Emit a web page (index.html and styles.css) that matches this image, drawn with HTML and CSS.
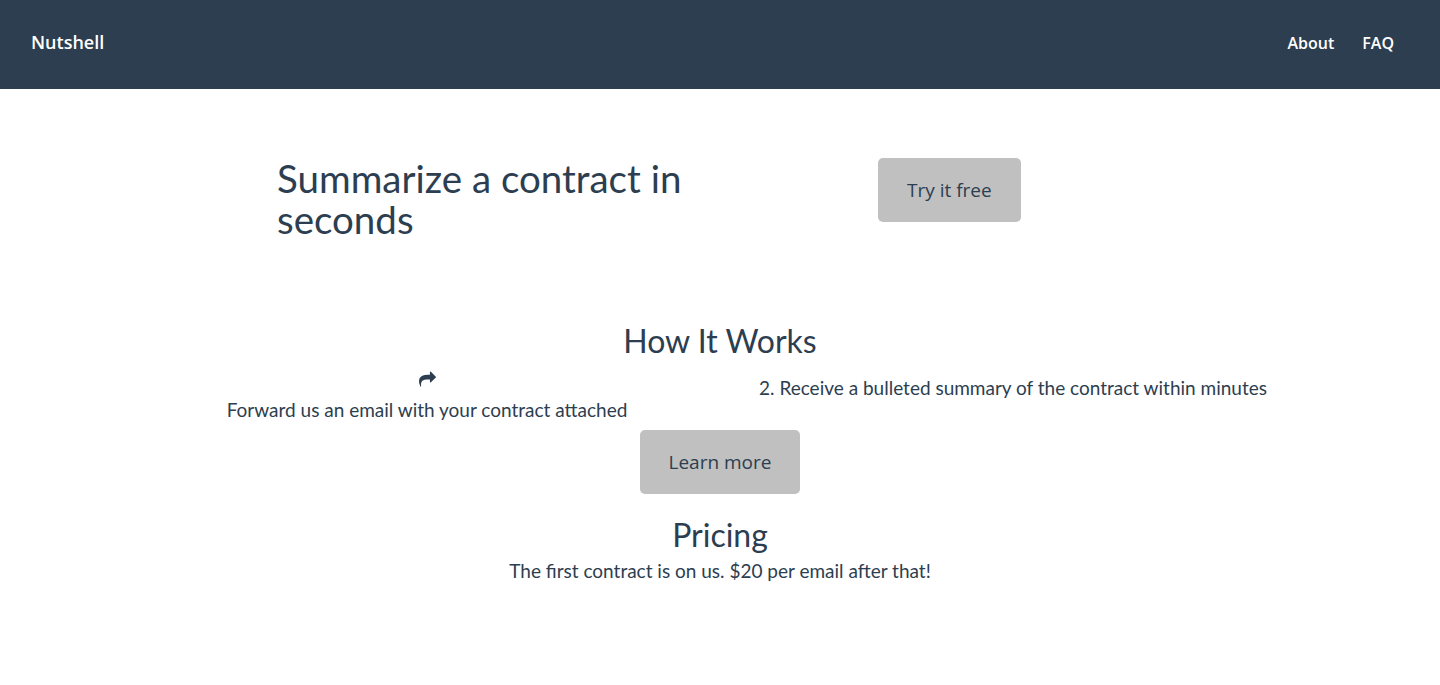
FILE: index.html
```html
<!DOCTYPE html>
<html>
<head>
<meta charset="utf-8">
<link rel="stylesheet" href="styles.css">
</head>
<body>
<header class="topbar">
  <a class="brand">Nutshell</a>
  <nav class="nav">
    <a class="nav-link">About</a>
    <a class="nav-link">FAQ</a>
  </nav>
</header>
<main>
  <section class="hero">
    <h1 class="hero-title">Summarize a contract in seconds</h1>
    <button class="btn btn-try">Try it free</button>
  </section>
  <section class="how">
    <h2 class="section-title">How It Works</h2>
    <div class="steps">
      <div class="step step-one">
        <svg class="share-icon" viewBox="0 0 1792 1792" width="17" height="17"><path fill="#2c3e50" d="M1792 640q0 26-19 45l-512 512q-19 19-45 19t-45-19-19-45v-256h-224q-98 0-175.5 6t-154 21.5-133 42.5-105.5 69.5-80 101-48.5 138.5-17.5 181q0 55 5 123 0 6 2.5 23.5t2.5 26.5q0 15-8.5 25t-23.5 10q-16 0-28-17-7-9-13-22t-13.5-30-10.5-24q-127-285-127-451 0-199 53-333 162-403 875-403h224v-256q0-26 19-45t45-19 45 19l512 512q19 19 19 45z"/></svg>
        <p class="step-text">Forward us an email with your contract attached</p>
      </div>
      <div class="step step-two">
        <p class="step-text">2. Receive a bulleted summary of the contract within minutes</p>
      </div>
    </div>
    <button class="btn btn-learn">Learn more</button>
  </section>
  <section class="pricing">
    <h2 class="section-title">Pricing</h2>
    <p class="pricing-text">The first contract is on us. $20 per email after that!</p>
  </section>
</main>
</body>
</html>
```
FILE: styles.css
```css
* { box-sizing: border-box; }
body {
  margin: 0;
  font-family: Lato, "Open Sans", sans-serif;
  color: #2c3e50;
  background: #fff;
}
.topbar {
  height: 89px;
  background: #2c3e50;
  display: flex;
  align-items: center;
  justify-content: space-between;
  padding: 0 46px 0 31px;
}
.brand {
  font-family: "Open Sans", sans-serif;
  font-weight: 600;
  font-size: 18px;
  color: #fff;
  margin-top: -6px;
}
.nav {
  display: flex;
  gap: 28px;
  margin-top: -4px;
}
.nav-link {
  font-family: "Open Sans", sans-serif;
  font-weight: 600;
  font-size: 16px;
  color: #fff;
}
.hero {
  width: 886px;
  margin: 0 auto;
  display: flex;
  align-items: flex-start;
  padding-top: 69px;
}
.hero-title {
  flex: 0 0 440px;
  margin: 0;
  font-weight: 400;
  font-size: 38.5px;
  line-height: 41px;
}
.btn {
  font-family: "Open Sans", sans-serif;
  font-size: 19px;
  line-height: 24px;
  color: #2c3e50;
  background: #c0c0c0;
  border: none;
  border-radius: 5px;
  padding: 20px 29px;
}
.btn-try {
  margin-left: 161px;
}
.how {
  text-align: center;
  padding-top: 81px;
}
.section-title {
  margin: 0;
  font-weight: 400;
  font-size: 32px;
  line-height: 40px;
}
.steps {
  width: 1172px;
  margin: 0 auto;
  display: grid;
  grid-template-columns: 1fr 1fr;
  align-items: start;
}
.step {
  display: flex;
  flex-direction: column;
  align-items: center;
}
.share-icon {
  display: block;
  margin-top: 10px;
}
.step-text {
  margin: 0;
  font-size: 19px;
  line-height: 22px;
}
.step-one .step-text { margin-top: 11px; }
.step-two { padding-top: 16px; }
.btn-learn {
  margin-top: 9px;
}
.pricing {
  text-align: center;
  padding-top: 21px;
}
.pricing-text {
  margin: 5px 0 0;
  font-size: 19px;
  line-height: 22px;
}
```
